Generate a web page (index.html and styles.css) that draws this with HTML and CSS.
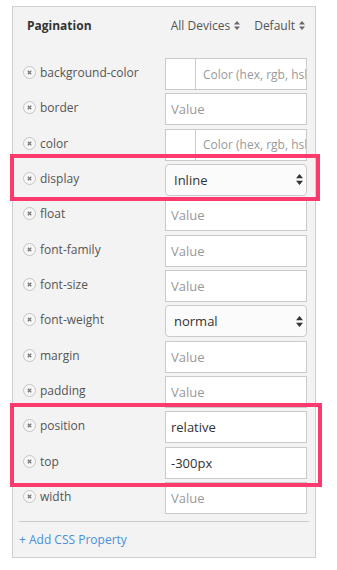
FILE: index.html
```html
<!DOCTYPE html>
<html>
<head>
<meta charset="utf-8">
<link rel="stylesheet" href="styles.css">
</head>
<body>
<div class="panel">
  <div class="head">
    <span class="title">Pagination</span>
    <span class="dd">All Devices <svg class="ud" width="6" height="9" viewBox="0 0 6 9"><path d="M3 0L6 3.6H0Z M3 9L0 5.4H6Z" fill="#666"/></svg></span>
    <span class="dd">Default <svg class="ud" width="6" height="9" viewBox="0 0 6 9"><path d="M3 0L6 3.6H0Z M3 9L0 5.4H6Z" fill="#666"/></svg></span>
  </div>

  <div class="rows">
    <div class="row">
      <div class="key"><svg class="rm" width="13" height="13" viewBox="0 0 13 13"><circle cx="6.5" cy="6.5" r="6" fill="#f7f7f7" stroke="#c4c4c4"/><path d="M4.8 4.8L8.2 8.2M8.2 4.8L4.8 8.2" stroke="#7a7a7a" stroke-width="1.4"/></svg><span class="lbl">background-color</span></div>
      <div class="field color"><span class="swatch"></span><input class="inp" placeholder="Color (hex, rgb, hsl, or name)"></div>
    </div>
    <div class="row">
      <div class="key"><svg class="rm" width="13" height="13" viewBox="0 0 13 13"><circle cx="6.5" cy="6.5" r="6" fill="#f7f7f7" stroke="#c4c4c4"/><path d="M4.8 4.8L8.2 8.2M8.2 4.8L4.8 8.2" stroke="#7a7a7a" stroke-width="1.4"/></svg><span class="lbl">border</span></div>
      <div class="field"><input class="inp" placeholder="Value"></div>
    </div>
    <div class="row">
      <div class="key"><svg class="rm" width="13" height="13" viewBox="0 0 13 13"><circle cx="6.5" cy="6.5" r="6" fill="#f7f7f7" stroke="#c4c4c4"/><path d="M4.8 4.8L8.2 8.2M8.2 4.8L4.8 8.2" stroke="#7a7a7a" stroke-width="1.4"/></svg><span class="lbl">color</span></div>
      <div class="field color"><span class="swatch"></span><input class="inp" placeholder="Color (hex, rgb, hsl, or name)"></div>
    </div>
    <div class="row">
      <div class="key"><svg class="rm" width="13" height="13" viewBox="0 0 13 13"><circle cx="6.5" cy="6.5" r="6" fill="#f7f7f7" stroke="#c4c4c4"/><path d="M4.8 4.8L8.2 8.2M8.2 4.8L4.8 8.2" stroke="#7a7a7a" stroke-width="1.4"/></svg><span class="lbl">display</span></div>
      <div class="field select"><span class="sel-text">Inline</span><svg class="ud" width="7" height="11" viewBox="0 0 7 11"><path d="M3.5 0L7 4.3H0Z M3.5 11L0 6.7H7Z" fill="#333"/></svg></div>
    </div>
    <div class="row">
      <div class="key"><svg class="rm" width="13" height="13" viewBox="0 0 13 13"><circle cx="6.5" cy="6.5" r="6" fill="#f7f7f7" stroke="#c4c4c4"/><path d="M4.8 4.8L8.2 8.2M8.2 4.8L4.8 8.2" stroke="#7a7a7a" stroke-width="1.4"/></svg><span class="lbl">float</span></div>
      <div class="field"><input class="inp" placeholder="Value"></div>
    </div>
    <div class="row">
      <div class="key"><svg class="rm" width="13" height="13" viewBox="0 0 13 13"><circle cx="6.5" cy="6.5" r="6" fill="#f7f7f7" stroke="#c4c4c4"/><path d="M4.8 4.8L8.2 8.2M8.2 4.8L4.8 8.2" stroke="#7a7a7a" stroke-width="1.4"/></svg><span class="lbl">font-family</span></div>
      <div class="field"><input class="inp" placeholder="Value"></div>
    </div>
    <div class="row">
      <div class="key"><svg class="rm" width="13" height="13" viewBox="0 0 13 13"><circle cx="6.5" cy="6.5" r="6" fill="#f7f7f7" stroke="#c4c4c4"/><path d="M4.8 4.8L8.2 8.2M8.2 4.8L4.8 8.2" stroke="#7a7a7a" stroke-width="1.4"/></svg><span class="lbl">font-size</span></div>
      <div class="field"><input class="inp" placeholder="Value"></div>
    </div>
    <div class="row">
      <div class="key"><svg class="rm" width="13" height="13" viewBox="0 0 13 13"><circle cx="6.5" cy="6.5" r="6" fill="#f7f7f7" stroke="#c4c4c4"/><path d="M4.8 4.8L8.2 8.2M8.2 4.8L4.8 8.2" stroke="#7a7a7a" stroke-width="1.4"/></svg><span class="lbl">font-weight</span></div>
      <div class="field select"><span class="sel-text">normal</span><svg class="ud" width="7" height="11" viewBox="0 0 7 11"><path d="M3.5 0L7 4.3H0Z M3.5 11L0 6.7H7Z" fill="#333"/></svg></div>
    </div>
    <div class="row">
      <div class="key"><svg class="rm" width="13" height="13" viewBox="0 0 13 13"><circle cx="6.5" cy="6.5" r="6" fill="#f7f7f7" stroke="#c4c4c4"/><path d="M4.8 4.8L8.2 8.2M8.2 4.8L4.8 8.2" stroke="#7a7a7a" stroke-width="1.4"/></svg><span class="lbl">margin</span></div>
      <div class="field"><input class="inp" placeholder="Value"></div>
    </div>
    <div class="row">
      <div class="key"><svg class="rm" width="13" height="13" viewBox="0 0 13 13"><circle cx="6.5" cy="6.5" r="6" fill="#f7f7f7" stroke="#c4c4c4"/><path d="M4.8 4.8L8.2 8.2M8.2 4.8L4.8 8.2" stroke="#7a7a7a" stroke-width="1.4"/></svg><span class="lbl">padding</span></div>
      <div class="field"><input class="inp" placeholder="Value"></div>
    </div>
    <div class="row">
      <div class="key"><svg class="rm" width="13" height="13" viewBox="0 0 13 13"><circle cx="6.5" cy="6.5" r="6" fill="#f7f7f7" stroke="#c4c4c4"/><path d="M4.8 4.8L8.2 8.2M8.2 4.8L4.8 8.2" stroke="#7a7a7a" stroke-width="1.4"/></svg><span class="lbl">position</span></div>
      <div class="field"><input class="inp" placeholder="Value" value="relative"></div>
    </div>
    <div class="row">
      <div class="key"><svg class="rm" width="13" height="13" viewBox="0 0 13 13"><circle cx="6.5" cy="6.5" r="6" fill="#f7f7f7" stroke="#c4c4c4"/><path d="M4.8 4.8L8.2 8.2M8.2 4.8L4.8 8.2" stroke="#7a7a7a" stroke-width="1.4"/></svg><span class="lbl">top</span></div>
      <div class="field"><input class="inp" placeholder="Value" value="-300px"></div>
    </div>
    <div class="row">
      <div class="key"><svg class="rm" width="13" height="13" viewBox="0 0 13 13"><circle cx="6.5" cy="6.5" r="6" fill="#f7f7f7" stroke="#c4c4c4"/><path d="M4.8 4.8L8.2 8.2M8.2 4.8L4.8 8.2" stroke="#7a7a7a" stroke-width="1.4"/></svg><span class="lbl">width</span></div>
      <div class="field"><input class="inp" placeholder="Value"></div>
    </div>
  </div>

  <div class="divider"></div>
  <a class="add">+ Add CSS Property</a>

  <div class="hl hl-display"></div>
  <div class="hl hl-pos"></div>
</div>
</body>
</html>
```

FILE: styles.css
```css
body {
  margin: 0;
  background: #fff;
  font-family: "Open Sans", "Liberation Sans", sans-serif;
}

.panel {
  position: relative;
  margin: 6px 0 0 12px;
  width: 302px;
  border: 1px solid #cfcfcf;
  background: #f3f3f3;
  box-shadow: 0 1px 1px rgba(0, 0, 0, 0.08);
  padding-bottom: 8px;
}

.head {
  display: flex;
  align-items: center;
  height: 36px;
  padding: 0 10px 0 14px;
}

.title {
  flex: 1;
  font-size: 12px;
  font-weight: 700;
  color: #333;
}

.dd {
  display: flex;
  align-items: center;
  gap: 4px;
  margin-left: 14px;
  font-size: 12px;
  color: #555;
}

.rows {
  margin-top: 15px;
  padding: 0 8px 0 10px;
  display: flex;
  flex-direction: column;
  gap: 3.33px;
}

.row {
  display: flex;
  align-items: center;
  height: 32px;
}

.key {
  flex: 1;
  display: flex;
  align-items: center;
  margin-bottom: 3px;
}

.rm {
  margin-right: 4px;
  flex: none;
}

.lbl {
  font-size: 12px;
  color: #555;
}

.field {
  width: 142px;
  height: 32px;
  box-sizing: border-box;
  border: 1px solid #cacaca;
  background: #fff;
  display: flex;
  align-items: center;
  overflow: hidden;
}

.inp {
  flex: 1;
  min-width: 0;
  height: 100%;
  border: 0;
  outline: none;
  background: transparent;
  padding: 0 0 0 5px;
  margin: 0;
  font-family: "Open Sans", "Liberation Sans", sans-serif;
  font-size: 13px;
  color: #333;
}

.inp::placeholder {
  color: #999;
}

.color .swatch {
  width: 30px;
  height: 100%;
  flex: none;
  border-right: 1px solid #cacaca;
  box-sizing: border-box;
}

.color .inp {
  padding-left: 7px;
  font-size: 12px;
}

.select {
  border-radius: 4px;
  background: #fbfbfb;
  padding: 0 3px 0 8px;
  justify-content: space-between;
}

.sel-text {
  font-size: 13px;
  color: #333;
}

.divider {
  margin: 7px 6px 0;
  border-top: 1px solid #cccccc;
}

.add {
  display: block;
  padding: 9px 0 0 6px;
  font-size: 12px;
  line-height: 18px;
  color: #4a90d9;
  text-decoration: none;
}

.hl {
  position: absolute;
  border: 4px solid #fc3a6e;
  box-sizing: border-box;
  pointer-events: none;
}

.hl-display {
  left: -3px;
  top: 147px;
  width: 310px;
  height: 47px;
}

.hl-pos {
  left: -3px;
  top: 396px;
  width: 312px;
  height: 84px;
}
```
